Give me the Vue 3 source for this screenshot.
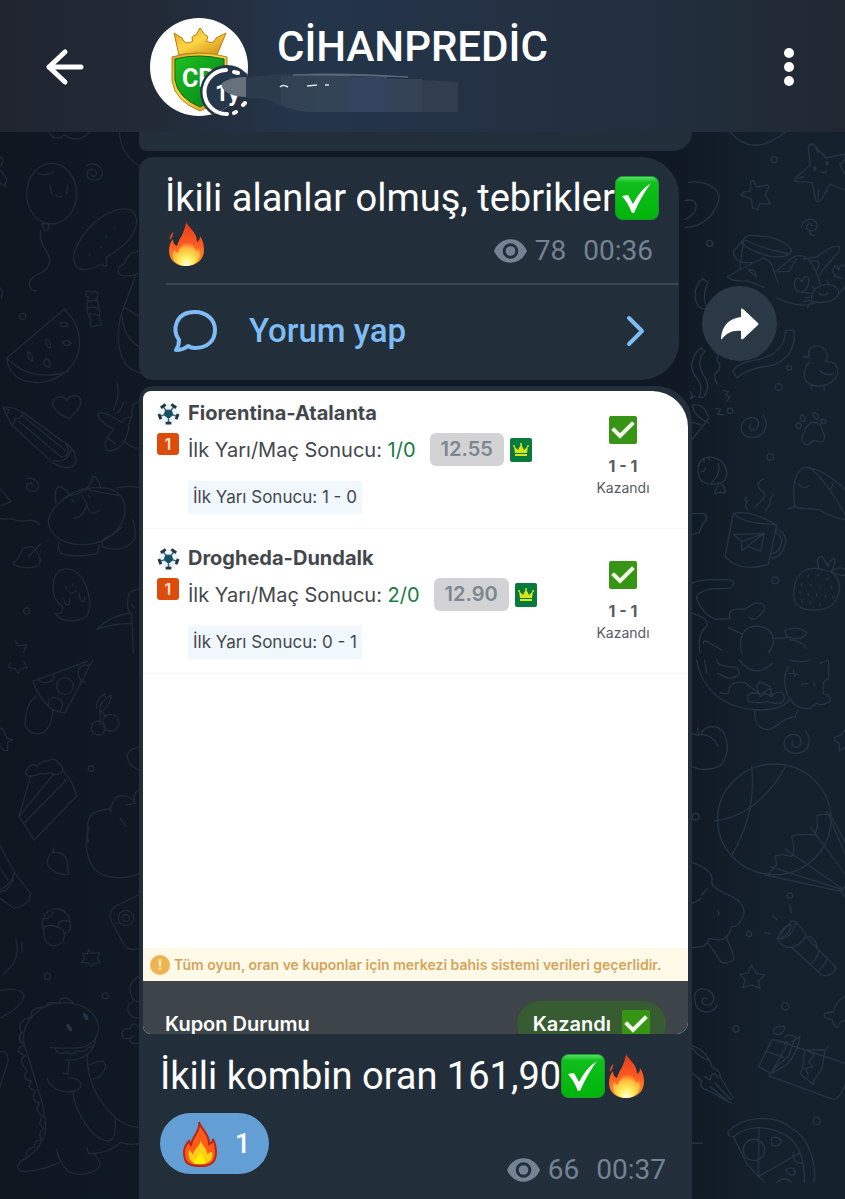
<script setup>
const bets = [
  { teams: 'Fiorentina-Atalanta', pick: '1/0', odds: '12.55', half: '1 - 0', score: '1 - 1' },
  { teams: 'Drogheda-Dundalk', pick: '2/0', odds: '12.90', half: '0 - 1', score: '1 - 1' },
]
</script>

<template>
  <div class="app">
    <svg class="sprite" aria-hidden="true">
      <defs>
        <linearGradient id="fire-body" x1="0" y1="0" x2="0" y2="1">
          <stop offset="0" stop-color="#e03a1a" />
          <stop offset="0.5" stop-color="#fb5a22" />
          <stop offset="1" stop-color="#ff9a2a" />
        </linearGradient>
        <radialGradient id="fire-core" cx="0.5" cy="0.95" r="0.75">
          <stop offset="0" stop-color="#fffde0" />
          <stop offset="0.35" stop-color="#ffee5c" />
          <stop offset="0.75" stop-color="#ffb63c" />
          <stop offset="1" stop-color="#ff8a38" stop-opacity="0" />
        </radialGradient>
        <linearGradient id="tick-face" x1="0" y1="0" x2="0" y2="1">
          <stop offset="0" stop-color="#5fe070" />
          <stop offset="0.14" stop-color="#0fbf1c" />
          <stop offset="1" stop-color="#00b40a" />
        </linearGradient>
        <linearGradient id="gold" x1="0" y1="0" x2="1" y2="1">
          <stop offset="0" stop-color="#e0a51c" />
          <stop offset="0.45" stop-color="#ffd645" />
          <stop offset="1" stop-color="#c98a12" />
        </linearGradient>
        <linearGradient id="shield" x1="0" y1="0" x2="1" y2="1">
          <stop offset="0" stop-color="#1fc01f" />
          <stop offset="1" stop-color="#04801b" />
        </linearGradient>
        <clipPath id="avatar-clip"><circle cx="49" cy="49" r="49" /></clipPath>
      </defs>
      <symbol id="fire" viewBox="0 0 38 44">
        <path d="M18 0C20 5 29 10 29 20C31 19 32 17 32 14C35 18 36 23 36 28C36 38 28 44 18 44C8 44 1 38 1 29C1 24 2 20 5 17C5 20 6 23 9 24C11 16 16 13 18 0Z" fill="url(#fire-body)" />
        <path d="M19 14C20 20 27 22 28 29C29 27 30 26 32 26C34 36 28 44 18 44C8 44 3 37 5 27C7 29 8 30 10 31C11 25 17 22 19 14Z" fill="url(#fire-core)" />
        <path d="M2 18C1 15 3 13 5 10C6 13 4 15 2 18Z" fill="#d94c28" />
      </symbol>
      <symbol id="fire-flat" viewBox="0 0 34 46">
        <path d="M16 1C17 7 27 13 26 23C29 22 30 20 30 18C34 26 34 36 30 41C26 45 22 45 17 45C8 45 3 43 2 38C0 31 1 25 6 20C7 22 7 23 8 25C8 16 18 11 16 1Z" fill="#ff5b17" stroke="#b92716" stroke-width="2" />
        <path d="M18 18C17 24 25 27 24 33C26 32 27 31 29 31C31 38 27 43 17 43C9 43 4 39 6 29C8 30 9 32 10 34C11 27 18 25 18 18Z" fill="#ffcd17" />
        <path d="M17 31C19 34 23 37 22 43H11C9 39 16 37 17 31Z" fill="#fff000" />
      </symbol>
      <symbol id="tick" viewBox="0 0 44 44">
        <rect x="0.5" y="0.5" width="43" height="43" rx="7" fill="url(#tick-face)" stroke="#199b31" />
        <path d="M7 20L13 19L18 28Q25 14 36 7Q27 19 19 37L17 37Q13 27 7 20Z" fill="#fff" />
      </symbol>
      <symbol id="won" viewBox="0 0 28 28">
        <rect width="28" height="28" rx="2" fill="#379415" />
        <path d="M5 14L11 20L23 8" fill="none" stroke="#f1fbe9" stroke-width="4" stroke-linecap="square" />
      </symbol>
      <symbol id="eye" viewBox="0 0 34 24">
        <path d="M17 0C9 0 3 5 0 12C3 19 9 24 17 24S31 19 34 12C31 5 25 0 17 0ZM17 4A8 8 0 1 1 17 20A8 8 0 1 1 17 4Z" fill="currentColor" fill-rule="evenodd" />
        <circle cx="17" cy="12" r="5" fill="currentColor" />
      </symbol>
      <symbol id="ball" viewBox="0 0 24 24">
        <circle cx="12" cy="12" r="11" fill="#e9f5f9" />
        <path d="M12 17L7.5 13.5L9 8.5H15L16.500 13.500Z" fill="#11536b" stroke="#1d4253" />
        <path d="M12 17V21M7.500 13.500L3 15M16.500 13.500L21 15M9 8.500L6 4M15 8.500L18 4" stroke="#35616f" stroke-width="1.5" />
        <path d="M9 22H15M2 12.500L4 18M22 12.500L20 18M4 6L9 2.500M20 6L15 2.500" stroke="#263640" stroke-width="3" />
      </symbol>
      <symbol id="crown" viewBox="0 0 22 24">
        <rect width="22" height="24" rx="2" fill="#087a3e" />
        <path d="M4 8L8 12L11 6L14 12L18 8L17 15H5ZM5 16H17V18H5Z" fill="#d8e51d" />
        <circle cx="4" cy="8" r="1" fill="#d8e51d" /><circle cx="11" cy="6" r="1" fill="#d8e51d" /><circle cx="18" cy="8" r="1" fill="#d8e51d" />
      </symbol>
    </svg>

    <svg class="wallpaper" viewBox="0 0 845 1199" preserveAspectRatio="xMidYMin slice" aria-hidden="true">
      <g class="doodle left" transform="translate(0 130) scale(.3333)">
        <path d="M148 8Q158 30 185 22Q192 8 205 22Q240 38 267 8M358 5Q362 70 417 108M0 80Q18 90 0 108M0 120L20 145L15 170L0 158" />
        <ellipse cx="155" cy="191" rx="75" ry="91" />
        <path d="M113 130Q140 140 160 125M150 165L154 190M203 165L199 190M168 194Q177 208 186 196M125 282L145 280L148 296L135 302ZM122 302C115 350 150 360 149 395C146 435 90 430 88 460Q88 484 108 482" />
        <path d="M259 108C284 90 315 115 305 138C293 160 255 150 261 128C270 109 295 120 288 135Q277 146 272 130" />
        <path d="M224 400C210 370 250 300 300 265C350 230 400 225 409 265C416 315 370 350 319 382L320 408Q312 410 305 402C270 420 235 430 224 400ZM345 292v3M318 320v3M303 350v3M269 372v3" />
        <path d="M417 365C390 365 380 380 373 402C350 410 348 435 370 437C390 440 404 435 417 430M407 435L372 530C345 590 340 720 430 730M370 530L417 560M366 560Q370 620 417 650" />
        <path d="M260 500C250 480 270 480 275 488C290 475 300 495 288 505C300 530 302 555 295 565C310 575 305 590 290 586C280 595 265 590 273 570C258 550 260 520 265 500ZM263 515Q280 508 294 515M262 535Q280 526 298 538M268 554Q280 548 298 558" />
        <path d="M0 474L8 486L4 504M193 538C260 600 250 700 180 737C130 770 30 770 20 684ZM20 684Q95 760 205 724M178 582Q190 570 205 584Q190 596 178 582M138 627Q155 635 151 653Q137 655 138 627M187 637Q200 625 214 640Q200 655 187 637M84 665Q100 675 97 692Q80 690 84 665M139 684Q155 695 147 711Q132 710 131 696Z" />
        <circle cx="68" cy="559" r="9" />
        <path d="M208 866C180 855 150 835 160 810C174 795 190 798 200 811C210 793 240 792 242 812C244 834 225 848 208 866ZM8 832Q35 828 70 848L210 950Q228 965 228 995Q215 1030 158 998L35 885ZM35 885Q45 880 45 865Q60 870 69 848M56 873L185 982M65 855L198 963M190 980Q215 970 198 943M160 992Q205 1000 214 957M12 835L28 840L20 856" />
        <path d="M352 760Q360 800 340 840M371 815Q365 840 351 849M417 815Q390 820 397 861C380 860 370 870 365 878C325 848 290 840 295 860Q305 880 342 898Q315 920 315 950Q325 975 360 950Q380 930 386 895Q387 870 397 861M370 932Q395 955 417 955M324 925L346 941" />
        <path d="M78 1045C105 1040 123 1061 112 1079C95 1090 72 1078 82 1063Q98 1054 97 1068M0 1075L32 1115L4 1128M0 1165Q20 1170 32 1166C55 1175 70 1175 85 1171Q108 1170 118 1184M38 1302Q60 1280 67 1258Q95 1240 108 1262Q140 1310 90 1313Q60 1315 38 1302M122 1242L86 1279" />
        <path d="M168 1120Q160 1070 180 1070Q202 1080 209 1096M252 1077Q270 1076 280 1039Q292 1037 303 1075M188 1108C250 1060 325 1070 350 1086C400 1130 370 1200 310 1232C245 1260 145 1240 145 1170Q155 1130 209 1096C245 1100 240 1070 275 1082L362 1098M245 1095L260 1123Q250 1165 220 1164M260 1123Q270 1165 298 1140M215 1107L222 1116M264 1095L270 1103M350 1074Q390 1065 417 1073M367 1190L340 1214Q305 1220 306 1250Q370 1275 406 1225Q405 1180 398 1170M178 1237Q170 1250 182 1270Q220 1284 290 1272Q298 1265 296 1247" />
        <path d="M164 1403C150 1345 170 1305 220 1320C270 1350 280 1440 258 1460C225 1480 180 1475 166 1451Q190 1455 188 1430Q170 1415 164 1403M197 1370v6M219 1362v6M204 1382Q215 1398 229 1382M191 1405Q195 1430 208 1423V1405M237 1390Q241 1420 253 1414L254 1402" />
        <circle cx="80" cy="1443" r="9" />
        <path d="M417 1378Q382 1380 383 1415Q380 1440 395 1454L400 1568M395 1450Q330 1455 292 1498Q345 1480 397 1480M396 1425L404 1434M45 1532L56 1548L80 1545L70 1568" />
      </g>
      <g class="doodle left" transform="translate(0 660) scale(.3333)">
        <path d="M30 8L26 22L45 26L54 40L66 25L82 23L72 5M278 0L195 160L160 150Q125 130 98 64L262 4M115 60Q135 75 155 62Q165 55 160 44M273 15Q230 10 235 45Q240 65 255 66M145 136Q140 115 163 112Q190 115 188 136L180 154" />
        <circle cx="195" cy="78" r="25" /><circle cx="332" cy="188" r="25" /><circle cx="295" cy="204" r="21" />
        <path d="M108 108Q70 140 77 200Q95 230 130 218Q160 195 158 150M300 195V150L320 170M290 145Q285 120 315 100L316 110M300 150Q295 130 333 105Q337 120 310 152M0 205Q10 200 20 235L38 239L23 246V271Q10 275 0 258" />
        <path d="M80 330Q95 305 110 318Q130 300 145 302Q165 290 177 311Q195 325 185 338Q165 350 153 338Q135 345 120 340Q100 352 82 347Q72 337 80 330M92 348L57 470L103 540L230 408Q215 355 190 335M57 470L160 343M75 487L200 358" />
        <circle cx="273" cy="326" r="8" />
        <path d="M417 262Q380 265 382 295Q390 320 417 330M417 390Q400 395 403 425M332 447Q340 405 370 407Q390 408 407 430L378 435M332 447Q260 450 263 500Q255 570 265 590Q280 650 350 653Q390 655 417 640M332 440V455M360 474L378 500M268 502Q258 525 266 546" />
        <path d="M160 564V575Q130 600 150 625Q180 650 206 642Q204 625 200 600Q190 575 160 577M0 555L45 640L92 700Q90 735 42 745L0 716M42 640Q35 672 0 690M40 655Q30 690 0 697M0 625L24 660" />
        <path d="M129 805C120 775 140 745 175 747Q215 755 211 810Q204 820 193 820C195 860 150 870 136 840Q128 820 134 800Q155 792 174 803Q190 805 193 820M130 775Q145 780 160 757M175 800Q175 775 205 784" />
        <path d="M417 704L345 740Q325 755 332 780L370 850Q385 875 417 867M348 792L360 788" /><circle cx="378" cy="774" r="23" /><circle cx="378" cy="774" r="10" />
        <path d="M266 868L274 880L299 878L293 894L300 908L284 909L275 918L264 908H244L254 895L248 880L263 882ZM48 838Q65 900 9 943M65 845L66 878M0 992Q60 980 72 1005Q65 1045 0 1074" />
        <circle cx="142" cy="949" r="9" /><circle cx="316" cy="1007" r="9" />
        <path d="M417 950Q375 970 398 1017L417 1027M400 1024Q380 1030 384 1055Q395 1075 417 1074M417 1103Q400 1080 391 1105Q355 1105 370 1135Q390 1140 398 1127Q375 1155 417 1150" />
        <path d="M72 1150C60 1080 130 1025 190 1029C250 1025 298 1065 296 1110C285 1175 220 1165 150 1163M72 1150L130 1340Q145 1430 125 1440Q115 1475 60 1505Q40 1530 75 1535Q130 1530 178 1508M72 1150Q55 1145 63 1117Q50 1080 93 1072Q90 1040 134 1042Q145 1020 175 1031Q190 995 222 1032M66 1117Q45 1145 75 1153Q35 1170 76 1188Q50 1200 82 1232Q60 1260 95 1263Q75 1285 106 1292Q90 1320 119 1330Q100 1350 128 1368Q110 1395 132 1405Q112 1420 125 1440Q100 1440 104 1460Q75 1470 78 1490" />
        <path d="M165 1165Q175 1190 198 1175Q220 1190 230 1173Q255 1180 264 1162Q285 1165 287 1134M195 1200Q255 1205 280 1161M207 1200L204 1243L190 1240M205 1253C245 1255 250 1275 236 1288C200 1305 150 1290 142 1256M262 1185C260 1270 300 1330 347 1374Q380 1400 417 1403M268 1215Q300 1200 310 1205C325 1220 310 1250 279 1257M220 1297C220 1355 290 1460 334 1440Q350 1430 345 1375M170 1467Q175 1505 204 1534C245 1555 300 1535 300 1510Q285 1475 266 1480L260 1465M266 1480Q320 1485 362 1447Q390 1458 417 1450M0 1175Q25 1170 24 1205L0 1280" />
        <ellipse class="solid" cx="208" cy="1103" rx="6" ry="13" transform="rotate(-30 208 1103)" /><ellipse class="solid" cx="257" cy="1070" rx="6" ry="12" transform="rotate(-30 257 1070)" />
      </g>
      <g class="doodle" transform="translate(685 130) scale(.3333)">
        <path d="M135 6Q205 85 300 7M10 157C70 150 110 180 100 215C80 270 45 290 0 292M0 212C45 200 45 250 0 268" />
        <circle cx="268" cy="89" r="9" /><circle cx="74" cy="340" r="9" /><circle cx="313" cy="713" r="7" /><circle cx="281" cy="771" r="10" /><circle cx="135" cy="842" r="8" /><circle cx="256" cy="981" r="10" /><circle cx="271" cy="1351" r="10" />
        <path d="M370 50Q378 35 390 48L423 84L480 72M370 50L375 105L330 145Q323 155 345 155L381 157L392 210Q400 220 410 208L435 162L480 180M480 80Q480 95 464 103L480 135M393 53L399 68M400 180V208M335 146L355 141M408 125Q415 132 425 122" />
        <path class="solid" d="M385 116a5 8 0 1 0 10 0a5 8 0 1 0-10 0M421 100a5 8 0 1 0 10 0a5 8 0 1 0-10 0" />
        <path d="M205 152L215 171L248 165L252 172L240 192L256 222L225 221L217 239L203 233L198 206L168 196L176 186L196 183L197 155ZM349 291C355 260 400 262 396 290C390 308 360 305 366 288Q375 275 381 287M373 300Q374 318 388 316" />
        <path d="M176 327Q185 312 220 318Q290 320 320 360Q315 385 260 380Q195 365 170 340ZM170 340L182 330Q240 360 315 372M170 335L145 365Q145 400 200 398M174 340L165 415M128 440Q170 415 235 384Q262 395 267 425L280 458M128 440Q135 455 188 453L237 472M190 420Q210 415 214 440ZM270 425L325 381Q350 370 372 390Q395 415 405 465M278 425L312 424L335 386M355 387L395 381Q450 340 463 350Q466 365 450 378L410 423L405 440M378 395Q400 385 403 405Q398 425 389 420M275 504Q350 540 400 515" />
        <path d="M352 488Q325 485 329 455Q340 430 350 457Q360 430 371 444Q375 470 352 488ZM471 445Q438 440 445 415Q455 395 460 420Q470 395 480 410M380 500Q385 465 430 463Q467 470 460 495Q440 525 380 515ZM402 490Q420 502 428 487M360 487L375 490M360 502L375 503M357 515L374 511M368 532L378 516M383 470L390 482M427 450L430 462M463 490L480 470" />
        <path d="M52 446L70 458Q50 490 65 535Q45 540 35 520Q20 475 52 446ZM302 600L327 601Q335 680 262 706Q185 715 157 744L143 725Q160 695 220 689Q300 670 302 600ZM47 653L61 664Q30 690 56 737Q80 765 55 803L41 802Q60 770 28 735Q5 695 47 653M90 664Q105 675 95 690Q115 710 92 730Q85 745 97 762M115 782L130 785L122 795L135 802L125 814M92 835L107 838L98 852L116 855M15 785L22 795L16 807L30 798" />
        <path d="M374 678C360 650 400 640 415 655C430 665 430 685 421 696C460 690 465 730 450 745C425 780 360 775 357 735Q360 705 374 697M374 678L354 680L372 685M405 723Q425 740 446 730M376 764L382 780M418 766L417 782M24 825Q60 820 71 866L22 927M22 827Q27 860 70 879M22 877L48 885M235 854C255 890 235 925 200 922C155 920 160 865 200 863C235 865 220 905 200 900Q188 893 198 882" />
        <path d="M380 878C400 875 410 885 413 905C425 925 415 940 400 935Q385 925 372 944C350 945 345 925 358 908Q360 890 380 878ZM346 855Q365 855 359 874Q345 880 346 855M383 850Q400 845 401 865Q390 875 383 850M405 872Q420 864 424 875Q415 890 405 872" /><circle cx="341" cy="887" r="8" />
        <path d="M42 1040C30 990 60 975 90 984C130 1000 135 1040 110 1058C75 1070 50 1060 42 1040M100 1000Q110 1030 80 1058M57 990v7M72 985v5M50 1025Q60 1025 62 1013M99 1058L100 1068Q85 1085 91 1092L105 1086L119 1090Q125 1075 108 1061" />
        <path d="M310 1137L329 1130C320 1065 330 1015 365 1012Q420 1020 480 1078M374 1012Q430 1060 480 1155M327 1130C350 1140 385 1132 405 1140Q440 1165 480 1169M342 1062Q350 1080 371 1068M445 1060L438 1078" />
        <path d="M145 1150L120 1280Q165 1330 250 1303L275 1185Q200 1140 145 1150ZM148 1150Q165 1180 272 1184M273 1198Q310 1210 300 1245Q285 1290 255 1283M273 1207Q295 1220 288 1245Q282 1268 258 1272M145 1213L238 1210L227 1265L190 1249L170 1262V1235ZM170 1235L238 1210L188 1248M187 1137Q175 1125 188 1115Q172 1108 185 1102M210 1133Q230 1110 241 1098Q240 1085 225 1078Q210 1060 236 1047M242 1141Q260 1120 255 1110L265 1092M22 1151H56Q75 1165 55 1180L42 1208L22 1213" />
        <path d="M328 1375C330 1325 375 1305 415 1320C460 1325 475 1370 455 1405C440 1450 355 1450 331 1420Q322 1400 328 1375ZM401 1314Q390 1280 412 1280L430 1310Q430 1290 449 1285Q450 1310 438 1325Q470 1305 480 1320M438 1325Q465 1340 480 1335" />
        <path d="M370 1335v6M400 1332v6M426 1344v6M350 1360v6M378 1363v6M405 1368v6M439 1369v6M345 1385v6M370 1390v6M395 1391v6M421 1396v6M444 1400v6M350 1410v6M376 1415v6M405 1421v6" />
        <path d="M22 1360Q40 1345 140 1350Q155 1360 135 1375L80 1377Q35 1385 35 1405Q55 1460 97 1468L135 1466Q125 1430 180 1438L208 1420Q235 1415 240 1435Q215 1480 192 1462M22 1450Q75 1465 65 1490Q35 1510 45 1568M130 1492L170 1512M55 1540Q55 1525 75 1540L110 1560M170 1568Q155 1490 217 1488Q270 1495 265 1540Q260 1560 250 1568M265 1525L305 1524L300 1500Q345 1485 365 1510Q350 1535 305 1520M315 1530Q345 1530 365 1555" />
      </g>
      <g class="doodle" transform="translate(685 660) scale(.3333)">
        <path d="M35 0C45 70 100 145 220 150Q300 150 315 115M58 0L65 40M95 0Q95 20 155 22Q180 50 130 55L98 40M163 0Q210 60 263 10M132 97Q130 60 180 68L220 98M105 98Q125 105 132 97M190 125Q180 90 225 102L240 95Q265 75 255 110Q295 80 298 115Q290 140 250 125L220 128ZM225 65L255 80L263 110L240 100L225 110L215 80Z" />
        <path d="M315 0Q350 10 375 0M405 10L431 0V55L416 65L415 100Q440 105 435 125Q410 140 395 130M310 20C295 45 295 90 315 115Q330 150 375 145L395 130M313 40L340 43M325 30L330 50M350 72L367 71M386 68L391 78M210 150Q205 205 250 209C285 200 285 175 330 170L339 150M38 203L40 225M22 220Q35 230 48 223Q55 200 85 200C130 205 135 270 117 300Q110 325 70 327Q45 332 22 320M48 223Q85 225 100 260" />
        <path d="M361 212C385 245 370 280 330 280C290 280 285 225 325 223C355 222 355 265 330 262Q315 255 325 242M480 210L468 225L449 232V243L462 247L463 273L480 262" />
        <ellipse cx="268" cy="478" rx="170" ry="166" />
        <path d="M200 320Q215 460 140 586M302 320Q220 465 90 483M252 640L275 614L271 588Q295 580 320 590L327 574Q325 545 320 530Q340 520 390 525L397 500V466Q420 460 438 466M255 620L470 688M240 645L472 695M300 567L478 690M375 500L480 642M426 455L480 580M435 462L480 546M478 680L468 690L480 712" />
        <circle cx="32" cy="470" r="10" /><circle cx="315" cy="707" r="8" /><circle cx="192" cy="822" r="8" /><circle cx="301" cy="1039" r="11" /><circle cx="153" cy="1107" r="9" /><circle cx="395" cy="1383" r="11" />
        <path d="M22 608Q90 630 80 670Q85 685 120 700C175 720 190 755 165 785Q160 800 140 800Q130 840 100 840L73 835Q65 865 22 862M22 730L48 715M50 705L67 685M98 752Q105 760 100 766M70 850L108 905Q120 915 146 900Q150 890 125 835" />
        <path d="M276 835L320 783Q335 780 363 825Q345 865 305 862Q280 850 276 835ZM276 835Q315 845 335 785M285 825Q290 800 318 795Q315 825 285 835M320 862L410 945Q430 955 455 925L363 830M368 829Q390 830 396 860M380 910Q400 890 402 872M402 930Q425 910 427 890M315 735L319 757M261 766L277 779M238 818L256 822" />
        <path d="M200 915L214 940L239 945L221 962L225 986L200 975L173 982L181 960L164 944L189 939ZM30 1020C20 980 75 975 86 1010C90 1035 60 1045 50 1025Q53 1007 67 1016M30 1020C30 1060 80 1070 97 1035M480 1008Q450 1025 445 1057Q410 1055 420 1072L442 1080Q445 1100 458 1103Q462 1083 480 1082" />
        <path d="M265 1110Q285 1090 301 1103Q290 1130 268 1122ZM261 1139L221 1220L258 1240L310 1148ZM245 1175L295 1192M270 1140L480 1210M300 1130Q315 1120 332 1132L310 1190Q270 1220 252 1248L440 1317Q460 1325 480 1275M320 1145L345 1130Q340 1170 310 1210L265 1238M360 1170L420 1170L430 1160M360 1170L352 1230Q340 1240 355 1250Q370 1260 385 1275L387 1260L410 1230L420 1170M362 1170L388 1185L371 1205L384 1220L362 1225L370 1245" />
        <path d="M22 1157Q70 1175 80 1220Q110 1235 105 1250L144 1314M22 1165Q40 1190 70 1200M22 1240L50 1262Q40 1285 65 1290L140 1330M60 1250L75 1260L80 1245L90 1240L100 1255M75 1280L130 1325M90 1270L138 1320M22 1450H52" />
        <path d="M145 1430Q125 1430 130 1415C170 1370 270 1360 320 1405C370 1430 395 1510 387 1568M145 1430Q175 1405 222 1403C320 1410 360 1460 358 1568M145 1430L185 1510L220 1550L240 1568M222 1405L220 1550L345 1478M325 1478Q320 1510 352 1510M260 1435Q275 1425 290 1443Q282 1465 260 1455ZM302 1528Q325 1515 332 1540Q315 1555 302 1528M275 1568Q298 1545 320 1568" /><circle cx="207" cy="1470" r="32" />
      </g>
    </svg>

    <header class="bar">
      <button class="icon-btn back" aria-label="Geri">
        <svg width="40" height="36" viewBox="0 0 40 36"><path d="M20 3L4 18L20 33M4 18H36" fill="none" stroke="#fff" stroke-width="5" stroke-linecap="round" stroke-linejoin="round" /></svg>
      </button>
      <svg class="avatar" width="99" height="99" viewBox="0 0 99 99" aria-hidden="true">
        <circle cx="49" cy="49" r="49" fill="#fff" />
        <path d="M24 15L32 20Q35 28 43 23Q40 18 46 17L50 10L55 17Q60 18 56 23Q64 27 66 20L76 15L67 37Q49 33 29 37Z" fill="url(#gold)" stroke="#b87c12" />
        <path d="M22 39Q49 31 77 39V63Q74 84 50 93Q25 83 22 63Z" fill="url(#gold)" stroke="#b18422" />
        <path d="M25 41Q49 35 74 41V62Q71 81 50 89Q28 80 25 62Z" fill="url(#shield)" stroke="#17661f" />
        <text x="32" y="69" class="crest">CP</text>
        <g clip-path="url(#avatar-clip)"><circle cx="77" cy="74" r="27" fill="#26374a" /></g>
        <path d="M76 52A22 22 0 0 0 77 96" class="ring" /><path d="M84 54L88 55M84 95L86 94M93 87L95 85" class="ring" />
        <text x="65" y="83" class="badge">1y</text>
        <path d="M72 65Q80 59 96 59V79Q76 78 72 69Z" fill="#66717c" />
      </svg>
      <div class="heading">
        <h1>CİHANPREDİC</h1>
        <svg class="smear" width="180" height="38" viewBox="0 0 180 38" aria-hidden="true">
          <path d="M-32 4Q15 -4 70 2L180 8V38H30Q5 36 -12 25L-32 24Z" fill="#2c3b4b" />
          <path d="M3 2H38V38H30Q12 36 3 30Z" fill="#324254" /><path d="M38 2H73V38H38Z" fill="#344457" /><path d="M73 3H109V38H73Z" fill="#34445e" /><path d="M109 5H144V38H109Z" fill="#354356" /><path d="M144 6L180 8V38H144Z" fill="#303e4e" />
          <path d="M15 1Q60 -2 130 3Q80 1 15 1" fill="#62717f" stroke="#596978" />
          <path d="M2 13Q5 10 10 13M29 12L39 11M47 11H51" fill="none" stroke="#dce2e7" stroke-width="1.5" />
        </svg>
      </div>
      <button class="icon-btn more" aria-label="Menü">
        <svg width="12" height="40" viewBox="0 0 12 40" fill="#fff"><circle cx="6" cy="6" r="5" /><circle cx="6" cy="20" r="5" /><circle cx="6" cy="34" r="5" /></svg>
      </button>
    </header>

    <main class="feed">
      <div class="bubble previous"></div>

      <div class="row">
        <article class="bubble text-post">
          <div class="body">
            <p class="line">İkili alanlar olmuş, tebrikler<svg class="tick" role="img" aria-label="✅"><use href="#tick" /></svg></p>
            <div class="line">
              <svg class="fire" role="img" aria-label="🔥"><use href="#fire" /></svg>
              <span class="meta"><svg class="eye" aria-hidden="true"><use href="#eye" /></svg><span>78</span><time>00:36</time></span>
            </div>
          </div>
          <button class="comment">
            <svg width="46" height="44" viewBox="0 0 46 44" aria-hidden="true"><path d="M7 31C0 21 3 3 23 3C35 3 43 11 43 21C43 32 35 39 23 39Q19 39 16 37Q11 41 4 41Q7 37 7 31Z" fill="none" stroke="currentColor" stroke-width="4" stroke-linejoin="round" /></svg>
            <span>Yorum yap</span>
            <svg class="chevron" width="18" height="30" viewBox="0 0 18 30" aria-hidden="true"><path d="M2 2L15 15L2 28" fill="none" stroke="currentColor" stroke-width="4" stroke-linecap="round" stroke-linejoin="round" /></svg>
          </button>
        </article>
        <button class="share" aria-label="Paylaş">
          <svg width="38" height="32" viewBox="0 0 38 32"><path d="M20 1Q20 0 22 1L37 15Q38 16 37 17L22 31Q20 32 20 30V23C11 22 6 25 1 31Q0 32 0 30C1 17 9 10 20 9Z" fill="#fff" /></svg>
        </button>
      </div>

      <article class="bubble photo-post">
        <section class="coupon">
          <ul class="bets">
            <li v-for="bet in bets" :key="bet.teams" class="bet">
              <div class="info">
                <h2><svg class="ball" aria-hidden="true"><use href="#ball" /></svg>{{ bet.teams }}</h2>
                <div class="market">
                  <span class="count">1</span>
                  <span>İlk Yarı/Maç Sonucu: <span class="pick">{{ bet.pick }}</span></span>
                  <span class="odds">{{ bet.odds }}</span>
                  <svg class="crown" aria-hidden="true"><use href="#crown" /></svg>
                </div>
                <span class="half">İlk Yarı Sonucu: {{ bet.half }}</span>
              </div>
              <div class="result">
                <svg class="won" aria-hidden="true"><use href="#won" /></svg>
                <strong>{{ bet.score }}</strong>
                <span>Kazandı</span>
              </div>
            </li>
          </ul>
          <p class="notice"><span class="alert">!</span>Tüm oyun, oran ve kuponlar için merkezi bahis sistemi verileri geçerlidir.</p>
          <div class="status">
            <span>Kupon Durumu</span>
            <span class="pill">Kazandı<svg class="won" aria-hidden="true"><use href="#won" /></svg></span>
          </div>
        </section>
        <p class="line caption">İkili kombin oran 161,90<svg class="tick" role="img" aria-label="✅"><use href="#tick" /></svg><svg class="fire" role="img" aria-label="🔥"><use href="#fire" /></svg></p>
        <div class="foot">
          <button class="reaction"><svg aria-hidden="true"><use href="#fire-flat" /></svg>1</button>
          <span class="meta"><svg class="eye" aria-hidden="true"><use href="#eye" /></svg><span>66</span><time>00:37</time></span>
        </div>
      </article>
    </main>
  </div>
</template>

<style>
body {
  margin: 0;
  background: #111a25;
}
</style>

<style scoped>
.app {
  position: relative;
  display: flex;
  flex-direction: column;
  min-height: 100vh;
  overflow: hidden;
  background: linear-gradient(90deg, #0f1620 0, #101823 17%, #101923 80%, #14212d 92%);
  color: #fff;
  font-family: Roboto, "Noto Sans", sans-serif;
}
.sprite {
  position: absolute;
  width: 0;
  height: 0;
}
.wallpaper {
  position: absolute;
  inset: 0;
  width: 100%;
  height: 100%;
}
.doodle {
  fill: none;
  stroke: #253442;
  stroke-width: 4;
  stroke-linecap: round;
  stroke-linejoin: round;
}
.doodle.left {
  stroke: #1f2a37;
}
.doodle .solid {
  fill: #253442;
  stroke: none;
}
button {
  margin: 0;
  padding: 0;
  border: 0;
  background: none;
  color: inherit;
  font: inherit;
  cursor: pointer;
}
h1,
h2,
p,
ul {
  margin: 0;
  padding: 0;
}
svg {
  flex: none;
  overflow: visible;
}
.bar {
  position: relative;
  display: flex;
  align-items: center;
  box-sizing: border-box;
  height: 132px;
  padding: 2px 50px 0 45px;
  background: linear-gradient(90deg, #20252f 0, #222a37 18%, #24354a 36%, #233143 60%, #212e3c 80%, #212832 100%);
}
.icon-btn {
  display: flex;
}
.avatar {
  margin-left: 65px;
}
.crest {
  fill: #fff;
  font: 700 25px Roboto, sans-serif;
}
.badge {
  fill: #fff;
  font: 700 23px Roboto, sans-serif;
}
.ring {
  fill: none;
  stroke: #fff;
  stroke-width: 4;
  stroke-linecap: round;
}
.heading {
  flex: 1;
  display: flex;
  flex-direction: column;
  margin-left: 28px;
}
.heading h1 {
  font-size: 42px;
  font-weight: 500;
  line-height: 50px;
}
.smear {
  margin: 2px 0 0 1px;
}
.feed {
  position: relative;
  flex: 1;
  display: flex;
  flex-direction: column;
  gap: 6px;
  padding-left: 139px;
}
.bubble {
  background: #222e3a;
}
.previous {
  height: 19px;
  margin-right: 153px;
  border-radius: 0 0 36px 14px;
}
.row {
  display: flex;
  align-items: flex-end;
  padding-right: 68px;
}
.text-post {
  flex: 1;
  border-radius: 14px 38px 38px 14px;
}
.body {
  padding: 18px 20px 16px 26px;
}
.line {
  display: flex;
  align-items: center;
  height: 46px;
  font-size: 38px;
  line-height: 46px;
  white-space: nowrap;
}
.tick {
  width: 44px;
  height: 44px;
}
.fire {
  width: 38px;
  height: 44px;
  margin-left: 3px;
}
.meta {
  display: flex;
  align-items: center;
  margin-left: auto;
  padding: 14px 6px 0 0;
  color: #748392;
  font-size: 28px;
  line-height: 36px;
}
.eye {
  width: 33px;
  height: 24px;
  margin-right: 8px;
}
.meta time {
  margin-left: 17px;
}
.comment {
  display: flex;
  align-items: center;
  width: calc(100% - 28px);
  height: 97px;
  margin-left: 27px;
  padding: 0 33px 4px 6px;
  border-top: 2px solid #3a4652;
  color: #7fbcf4;
  font-size: 33px;
  font-weight: 500;
}
.comment span {
  margin-left: 31px;
}
.chevron {
  margin-left: auto;
}
.share {
  flex: none;
  display: flex;
  align-items: center;
  justify-content: center;
  width: 75px;
  height: 75px;
  margin: 0 0 19px 23px;
  border-radius: 50%;
  background: #2b3947;
}
.photo-post {
  flex: 1;
  margin-right: 153px;
  padding: 5px 4px 0;
  border-radius: 14px 36px 0 0;
}
.coupon {
  display: flex;
  flex-direction: column;
  overflow: hidden;
  border-radius: 8px 36px 12px 8px;
  background: #fff;
  color: #43474c;
  font-family: Inter, "Noto Sans", sans-serif;
}
.bets {
  min-height: 557px;
  list-style: none;
}
.bet {
  display: flex;
  padding: 17px 0 14px 14px;
  border-bottom: 1px solid #f4f5f6;
}
.bet:first-child {
  padding-top: 10px;
}
.info {
  flex: 1;
}
.bet h2 {
  display: flex;
  align-items: center;
  gap: 8px;
  font-size: 20px;
  font-weight: 700;
  line-height: 24px;
}
.ball {
  width: 23px;
  height: 23px;
}
.market {
  display: flex;
  align-items: center;
  height: 33px;
  margin: 8px 0 15px;
  font-size: 20px;
  white-space: nowrap;
}
.count {
  align-self: flex-start;
  width: 22px;
  height: 22px;
  margin-right: 9px;
  border-radius: 3px;
  background: #dd4c0b;
  color: #ffe4d4;
  font-size: 16px;
  font-weight: 600;
  line-height: 22px;
  text-align: center;
}
.pick {
  color: #177b45;
}
.odds {
  margin-left: 14px;
  padding: 0 11px;
  border-radius: 6px;
  background: #d3d3d5;
  color: #7c8790;
  font-weight: 600;
  line-height: 33px;
}
.crown {
  width: 22px;
  height: 24px;
  margin-left: 6px;
}
.half {
  display: inline-block;
  margin-left: 31px;
  padding: 0 5px;
  background: #f0f7fd;
  font-size: 17px;
  line-height: 33px;
  vertical-align: top;
}
.result {
  display: flex;
  flex-direction: column;
  align-items: center;
  width: 130px;
  padding-top: 15px;
  color: #555c63;
  font-size: 14px;
  line-height: 20px;
}
.won {
  width: 28px;
  height: 28px;
}
.result strong {
  margin: 12px 0 2px;
  font-size: 16px;
  font-weight: 700;
}
.notice {
  display: flex;
  align-items: center;
  gap: 4px;
  height: 33px;
  padding-left: 7px;
  background: #fff9e8;
  color: #d5a45b;
  font-size: 14px;
  font-weight: 600;
  white-space: nowrap;
}
.alert {
  width: 20px;
  border-radius: 50%;
  background: #efb44f;
  color: #fff0c5;
  line-height: 20px;
  text-align: center;
}
.status {
  display: flex;
  align-items: flex-start;
  justify-content: space-between;
  box-sizing: border-box;
  height: 53px;
  padding: 20px 22px 0;
  background: #3e454a;
  color: #fff;
  font-size: 20px;
  font-weight: 600;
  line-height: 46px;
}
.pill {
  display: flex;
  align-items: center;
  gap: 11px;
  padding: 0 16px;
  border-radius: 23px;
  background: #375c31;
}
.caption {
  margin: 19px 17px 0;
}
.foot {
  display: flex;
  align-items: flex-start;
  margin: 14px 16px 0 17px;
}
.reaction {
  display: flex;
  align-items: center;
  gap: 18px;
  height: 61px;
  padding: 0 19px 0 23px;
  border-radius: 31px;
  background: #639fd5;
  font-size: 27px;
  font-weight: 500;
}
.reaction svg {
  width: 34px;
  height: 46px;
}
.foot .meta {
  padding-top: 39px;
}
</style>
